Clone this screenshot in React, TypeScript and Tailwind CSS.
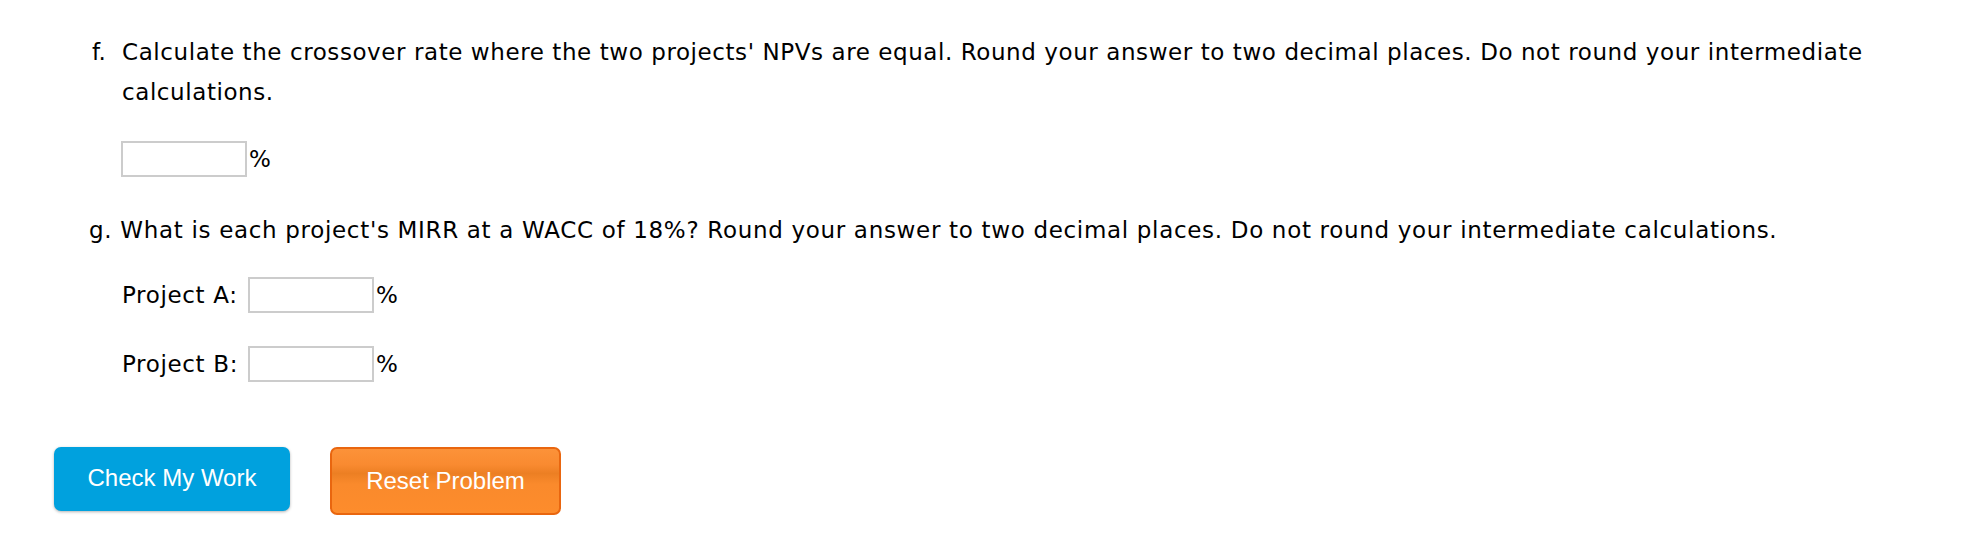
import React from "react";

function Box() {
  return (
    <input
      type="text"
      className="w-[126px] h-[36px] border-2 border-[#cccccc] bg-white outline-none"
    />
  );
}

export default function App() {
  return (
    <div
      className="w-[1976px] h-[552px] bg-white text-black pt-[32px] pl-[92px]"
      style={{ fontFamily: '"DejaVu Sans", Verdana, sans-serif' }}
    >
      <div className="flex text-[23px] leading-[40px] tracking-[0.58px]">
        <span className="w-[30px] shrink-0 tracking-normal">f.</span>
        <p className="max-w-[1790px]">
          Calculate the crossover rate where the two projects' NPVs are equal. Round your answer to two decimal places. Do not round your intermediate calculations.
        </p>
      </div>
      <div className="flex items-center mt-[29px] pl-[29px] text-[23px] leading-[36px]">
        <Box />
        <span className="ml-[2px]">%</span>
      </div>
      <div className="mt-[33px] text-[23px] leading-[40px] tracking-[0.68px] -ml-[3px]">
        g. What is each project's MIRR at a WACC of 18%? Round your answer to two decimal places. Do not round your intermediate calculations.
      </div>
      <div className="flex items-center mt-[27px] pl-[30px] text-[23px] leading-[36px] tracking-[0.65px]">
        <span className="w-[126px]">Project A:</span>
        <Box />
        <span className="ml-[2px] tracking-normal">%</span>
      </div>
      <div className="flex items-center mt-[33px] pl-[30px] text-[23px] leading-[36px] tracking-[0.65px]">
        <span className="w-[126px]">Project B:</span>
        <Box />
        <span className="ml-[2px] tracking-normal">%</span>
      </div>
      <div
        className="flex items-start gap-[40px] mt-[65px] -ml-[38px]"
        style={{ fontFamily: '"Liberation Sans", Arial, sans-serif' }}
      >
        <button className="w-[236px] h-[64px] rounded-[7px] bg-[#00a1de] text-white text-[24px] shadow-[0_1px_3px_rgba(0,0,0,0.3)] pb-[2px]">
          Check My Work
        </button>
        <button className="w-[231px] h-[68px] rounded-[7px] border-2 border-[#e9660f] bg-[linear-gradient(to_bottom,#fc9239_0%,#f98a30_25%,#ec7f23_38%,#fa8a2c_55%,#fd8c2c_100%)] text-white text-[24px]">
          Reset Problem
        </button>
      </div>
    </div>
  );
}
